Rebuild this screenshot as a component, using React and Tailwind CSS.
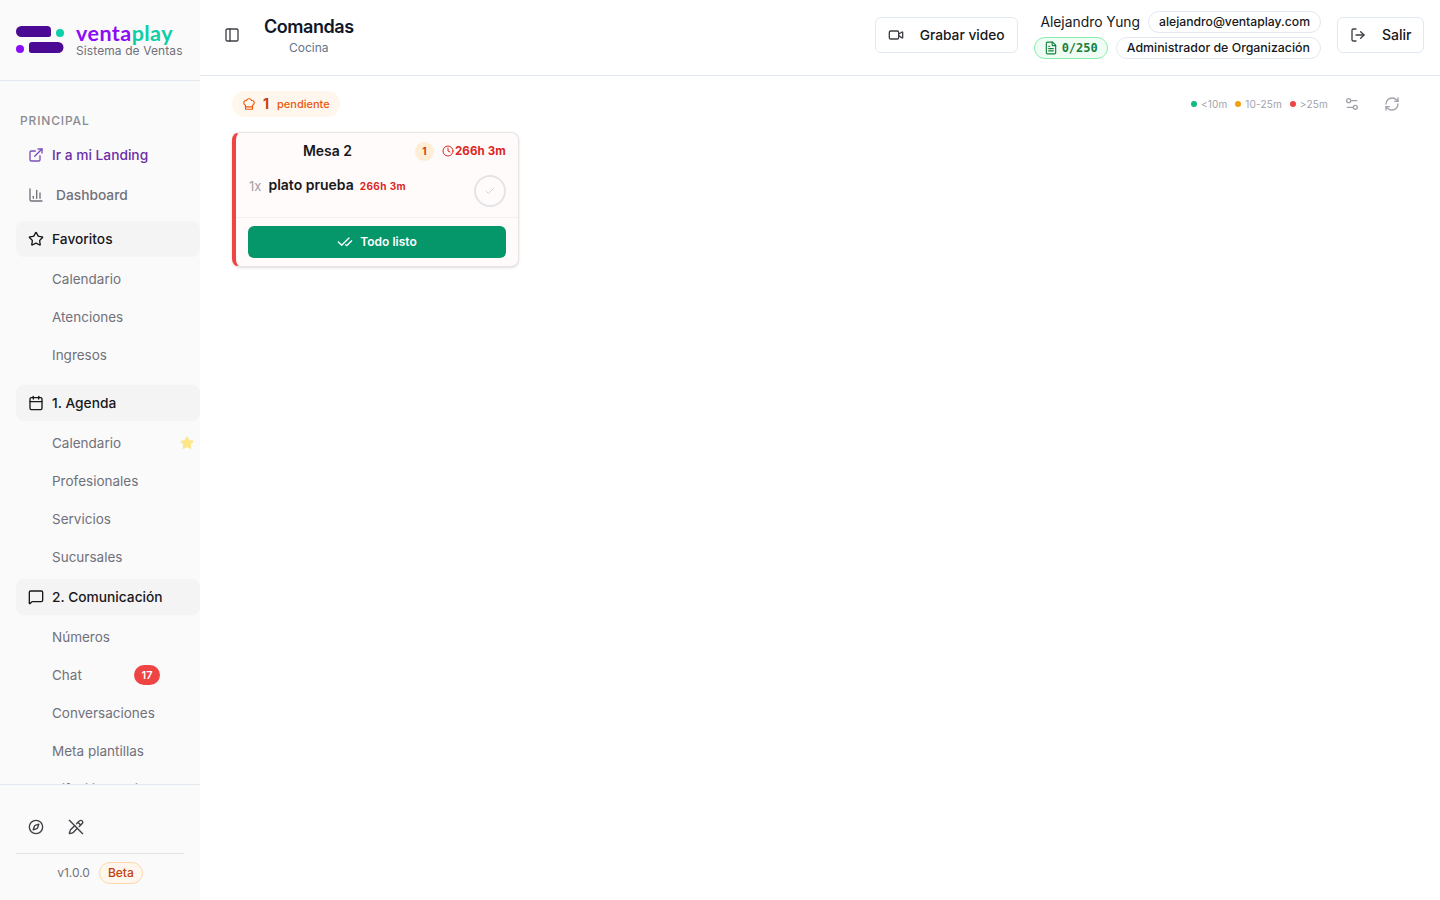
import {
  BarChart3,
  Calendar,
  CheckCheck,
  Check,
  ChefHat,
  Clock,
  Compass,
  ExternalLink,
  FileText,
  LogOut,
  MessageSquare,
  PanelLeft,
  PencilOff,
  RefreshCw,
  Settings2,
  Star,
  Video,
} from "lucide-react";

function SubItem({ label, children }) {
  return (
    <div className="flex h-[38px] shrink-0 items-center justify-between pl-[52px] text-[13.5px] text-[#71717a]">
      <span>{label}</span>
      {children}
    </div>
  );
}

function Group({ icon: Icon, label }) {
  return (
    <div className="ml-4 flex h-9 shrink-0 items-center gap-2 rounded-lg bg-[#f4f4f5] pl-3 text-[13.75px] font-medium text-[#18181b]">
      <Icon className="h-4 w-4" strokeWidth={2} />
      <span>{label}</span>
    </div>
  );
}

function Logo() {
  return (
    <svg width="48" height="28" viewBox="0 0 48 28" className="shrink-0">
      <path d="M5.500 0H31a4 4 0 0 1 4 4V8.500a2.500 2.500 0 0 1-2.500 2.500H5.500a5.500 5.500 0 0 1 0-11Z" fill="#4a0a94" />
      <circle cx="44" cy="7" r="4" fill="#0ccfa8" />
      <circle cx="4" cy="23" r="4" fill="#8b0cf5" />
      <path d="M16 16H42a5.500 5.500 0 0 1 0 11H15.500a2.500 2.500 0 0 1-2.500-2.500V19a3 3 0 0 1 3-3Z" fill="#4a0a94" />
    </svg>
  );
}

function Sidebar() {
  return (
    <aside className="flex h-screen w-[200px] shrink-0 flex-col bg-[#fafafa]">
      <div className="flex h-[81px] shrink-0 items-center gap-3 border-b border-[#e2e8f0] pl-4">
        <Logo />
        <div className="flex flex-col">
          <span className="-mt-[1px] h-[20px] text-[21.5px] leading-[20px] font-bold tracking-[0.45px] text-[#8b0cf5] font-['Lato',sans-serif]">
            venta<span className="text-[#0ccfa8]">play</span>
          </span>
          <span className="mt-[1px] text-xs leading-[13px] tracking-[0.1px] text-[#71717a]">Sistema de Ventas</span>
        </div>
      </div>

      <nav className="flex min-h-0 flex-1 flex-col overflow-hidden">
        <div className="mt-[32px] h-4 shrink-0 pl-5 text-xs leading-4 font-medium tracking-[0.07em] text-[#8a8a91]">PRINCIPAL</div>
        <div className="mt-[6px] flex h-10 shrink-0 items-center gap-2 pl-7 text-[13.75px] font-medium text-[#6b2fa8]">
          <ExternalLink className="h-4 w-4 text-[#7c4dbd]" />
          <span>Ir a mi Landing</span>
        </div>
        <div className="mb-[6px] flex h-10 shrink-0 items-center gap-3 pl-7 text-[13.75px] font-medium text-[#71717a]">
          <BarChart3 className="h-4 w-4" />
          <span>Dashboard</span>
        </div>

        <Group icon={Star} label="Favoritos" />
        <div className="mt-[3px] flex flex-col">
          <SubItem label="Calendario" />
          <SubItem label="Atenciones" />
          <SubItem label="Ingresos" />
        </div>

        <div className="mt-[11px]">
          <Group icon={Calendar} label="1. Agenda" />
        </div>
        <div className="mt-[3px] flex flex-col">
          <SubItem label="Calendario">
            <Star className="mr-[6px] h-[14px] w-[14px] fill-[#fde68a] text-[#fde68a]" />
          </SubItem>
          <SubItem label="Profesionales" />
          <SubItem label="Servicios" />
          <SubItem label="Sucursales" />
        </div>

        <div className="mt-[3px]">
          <Group icon={MessageSquare} label="2. Comunicación" />
        </div>
        <div className="mt-[3px] flex flex-col">
          <SubItem label="Números" />
          <SubItem label="Chat">
            <span className="mr-10 flex h-5 w-[26px] items-center justify-center rounded-full bg-[#ef4444] pt-[1px] text-[11px] font-semibold text-white">17</span>
          </SubItem>
          <SubItem label="Conversaciones" />
          <SubItem label="Meta plantillas" />
          <SubItem label="Difusión masiva" />
        </div>
      </nav>

      <div className="flex h-[116px] shrink-0 flex-col border-t border-[#e2e8f0] px-4">
        <div className="flex h-[68px] shrink-0 items-center gap-6 pt-[16px] pl-3">
          <Compass className="h-4 w-4 text-[#3f3f46]" />
          <PencilOff className="h-4 w-4 text-[#3f3f46]" />
        </div>
        <div className="flex flex-1 items-center justify-center gap-[9px] border-t border-[#e4e4e7] pb-[8px]">
          <span className="text-xs text-[#71717a]">v1.0.0</span>
          <span className="flex h-[22px] items-center rounded-full border border-[#fed7aa] bg-[#fff7ed] px-2 text-xs font-medium text-[#c2410c]">Beta</span>
        </div>
      </div>
    </aside>
  );
}

function Header() {
  return (
    <header className="flex h-[76px] shrink-0 items-center border-b border-[#e2e8f0] pr-4 pb-[5px] pl-6">
      <PanelLeft className="h-4 w-4 text-[#3f3f46]" />
      <div className="ml-6 flex flex-col items-center">
        <span className="text-lg leading-6 font-semibold tracking-tight text-[#0f172a]">Comandas</span>
        <span className="mt-[1px] -mb-[1px] text-xs leading-4 text-[#64748b]">Cocina</span>
      </div>
      <div className="ml-auto flex items-center">
        <div className="flex h-9 w-[143px] items-center gap-4 rounded-md border border-[#e2e8f0] pl-3 text-[13.75px] font-medium text-[#18181b]">
          <Video className="h-4 w-4 text-[#3f3f46]" />
          <span>Grabar video</span>
        </div>
        <div className="ml-4 flex flex-col items-end gap-[4px]">
          <div className="flex items-center gap-2">
            <span className="text-[13.85px] text-[#18181b]">Alejandro Yung</span>
            <span className="flex h-[22px] items-center rounded-full border border-[#e2e8f0] px-[10px] text-[12.2px] font-medium text-[#18181b]">alejandro@ventaplay.com</span>
          </div>
          <div className="flex items-center gap-2">
            <span className="flex h-[22px] items-center gap-[4px] rounded-full border border-[#86efac] bg-[#f0fdf4] px-[9px] font-['DejaVu_Sans_Mono',monospace] text-xs font-bold text-[#15803d]">
              <FileText className="h-[14px] w-[14px]" />
              0/250
            </span>
            <span className="flex h-[22px] items-center rounded-full border border-[#e2e8f0] px-[10px] text-[12.36px] font-medium text-[#18181b]">Administrador de Organización</span>
          </div>
        </div>
        <div className="ml-4 flex h-9 w-[87px] items-center gap-4 rounded-md border border-[#e2e8f0] pl-3 text-sm font-medium text-[#18181b]">
          <LogOut className="h-4 w-4 text-[#3f3f46]" />
          <span>Salir</span>
        </div>
      </div>
    </header>
  );
}

function OrderCard() {
  return (
    <div className="w-[287px] overflow-hidden rounded-lg border border-l-4 border-[#e7e5e4] border-l-[#ef4444] bg-[#fffbfa] shadow-sm">
      <div className="flex h-9 items-center pr-3">
        <span className="flex-1 pl-[4px] text-center text-sm font-semibold text-[#18181b]">Mesa 2</span>
        <span className="flex h-[19px] w-[19px] items-center justify-center rounded-full bg-[#ffedd5] text-[10px] font-bold text-[#c2410c]">1</span>
        <span className="ml-[8px] flex items-center gap-[1px] text-[11.5px] font-bold tracking-[0.15px] text-[#dc2626]">
          <Clock className="h-3 w-3" />
          <span className="mt-[1px]">266h 3m</span>
        </span>
      </div>
      <div className="flex h-[49px] items-start border-b border-[#f5f0ee] pt-[6px] pr-3 pl-[13px]">
        <span className="mt-[1px] text-[13px] leading-5 text-[#a1a1aa]">1x</span>
        <span className="ml-[7px] text-sm leading-[20px] font-semibold text-[#18181b]">plato prueba</span>
        <span className="mt-[1px] ml-[6px] text-[10px] leading-5 font-bold tracking-[0.4px] text-[#dc2626]">266h 3m</span>
        <span className="ml-auto flex h-8 w-8 items-center justify-center rounded-full border-2 border-[#e4e4e7]">
          <Check className="h-3 w-3 text-[#d4d4d8]" />
        </span>
      </div>
      <div className="px-3 pt-2 pb-2">
        <div className="flex h-8 items-center justify-center gap-[7px] rounded-md bg-[#059669] text-xs font-semibold text-white">
          <CheckCheck className="h-4 w-4" />
          <span>Todo listo</span>
        </div>
      </div>
    </div>
  );
}

function Toolbar() {
  return (
    <div className="flex h-[26px] items-center justify-between">
      <div className="flex h-[26px] items-center gap-[7px] rounded-full bg-[#fff7ed] px-[10px]">
        <ChefHat className="h-[14px] w-[14px] text-[#ea580c]" />
        <span className="text-sm font-bold text-[#c2410c]">1</span>
        <span className="ml-[1px] text-[11px] font-medium text-[#ea580c]">pendiente</span>
      </div>
      <div className="flex items-center pr-[8px]">
        <div className="flex items-center gap-[4px] text-[10px] tracking-[0.15px] text-[#a1a1aa]">
          <span className="h-[6px] w-[6px] rounded-full bg-[#10b981]" />
          <span>&lt;10m</span>
          <span className="ml-[4px] h-[6px] w-[6px] rounded-full bg-[#f59e0b]" />
          <span>10-25m</span>
          <span className="ml-[4px] h-[6px] w-[6px] rounded-full bg-[#ef4444]" />
          <span>&gt;25m</span>
        </div>
        <Settings2 className="ml-[16px] h-4 w-4 text-[#a1a1aa]" />
        <RefreshCw className="ml-6 h-4 w-4 text-[#a1a1aa]" />
      </div>
    </div>
  );
}

export default function App() {
  return (
    <div className="flex h-screen overflow-hidden bg-white font-['Inter',sans-serif]">
      <Sidebar />
      <div className="flex min-w-0 flex-1 flex-col">
        <Header />
        <main className="flex flex-col gap-[15px] px-8 pt-[15px]">
          <Toolbar />
          <OrderCard />
        </main>
      </div>
    </div>
  );
}
